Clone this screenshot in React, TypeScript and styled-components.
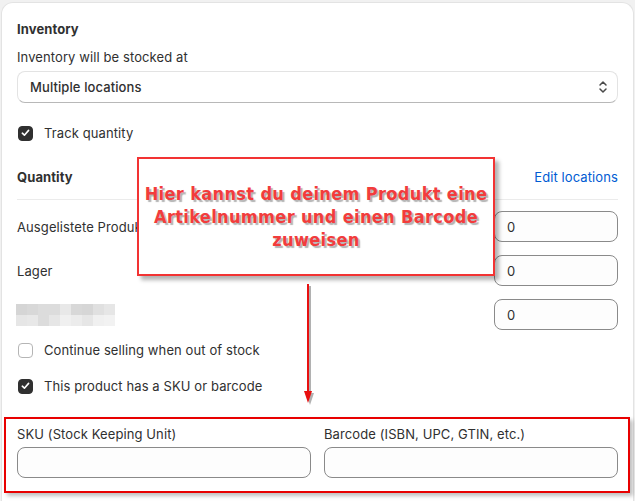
import React from 'react';
import styled, { createGlobalStyle } from 'styled-components';

const GlobalStyle = createGlobalStyle`
  body {
    margin: 0;
    background: #f1f1f1;
    font-family: Inter, 'Liberation Sans', sans-serif;
    color: #303030;
    font-size: 13px;
    letter-spacing: 0.1px;
  }
`;

const Page = styled.div`
  position: relative;
  width: 635px;
  height: 501px;
  overflow: hidden;
`;

const Card = styled.section`
  margin: 2px 1px 0;
  background: #fff;
  border: 1px solid #e3e3e3;
  border-bottom: none;
  border-radius: 12px 12px 0 0;
  padding: 16px 15px 40px;
  height: 520px;
  box-sizing: border-box;
`;

const Heading = styled.h2`
  margin: 0;
  font-size: 13px;
  font-weight: 650;
  line-height: 20px;
`;

const Label = styled.div`
  line-height: 20px;
`;

const Select = styled.div`
  margin-top: 4px;
  height: 32px;
  box-sizing: border-box;
  border: 1px solid #e3e3e3;
  border-bottom-color: #b8b8b8;
  border-radius: 8px;
  display: flex;
  align-items: center;
  justify-content: space-between;
  padding: 0 8px 0 12px;
  font-weight: 500;
`;

const CheckRow = styled.label<{ $top: number }>`
  display: flex;
  align-items: center;
  gap: 11px;
  margin-top: ${({ $top }) => $top}px;
  line-height: 20px;
`;

const Box = styled.span<{ $checked?: boolean }>`
  width: 15px;
  height: 15px;
  box-sizing: border-box;
  margin-left: 1px;
  border-radius: 4px;
  display: flex;
  align-items: center;
  justify-content: center;
  background: ${({ $checked }) => ($checked ? '#303030' : '#fff')};
  border: 1px solid ${({ $checked }) => ($checked ? '#303030' : '#b5b5b5')};
`;

const QuantityHeader = styled.div`
  margin-top: 24px;
  display: flex;
  justify-content: space-between;
  padding-bottom: 12px;
  border-bottom: 1px solid #ebebeb;
`;

const Link = styled.a`
  color: #005bd3;
  line-height: 20px;
`;

const Rows = styled.div`
  display: flex;
  flex-direction: column;
  gap: 13px;
  margin-top: 11px;
`;

const QtyRow = styled.div`
  display: flex;
  justify-content: space-between;
  align-items: center;
`;

const Input = styled.div<{ $width?: string }>`
  width: ${({ $width }) => $width || '100%'};
  height: 31px;
  box-sizing: border-box;
  border: 1px solid #8a8a8a;
  border-radius: 8px;
  background: #fdfdfd;
  padding: 0 12px;
  display: flex;
  align-items: center;
`;

const Pixels = styled.div`
  display: grid;
  grid-template-columns: repeat(9, 11px);
  grid-auto-rows: 11px;
  margin-left: -1px;
`;

const Pixel = styled.span<{ $c: string }>`
  background: ${({ $c }) => $c};
`;

const Fields = styled.div`
  margin-top: 28px;
  display: grid;
  grid-template-columns: 1fr 1fr;
  gap: 13px;
`;

const Field = styled.div`
  display: flex;
  flex-direction: column;
  gap: 3px;
`;

const Callout = styled.div`
  position: absolute;
  left: 137px;
  top: 157px;
  width: 358px;
  height: 119px;
  box-sizing: border-box;
  background: #fff;
  border: 2px solid #f23333;
  box-shadow: 4px 4px 4px rgba(0, 0, 0, 0.3);
  padding-top: 23px;
  text-align: center;
  font-family: 'DejaVu Sans Condensed', 'DejaVu Sans', sans-serif;
  font-weight: 700;
  font-size: 18px;
  line-height: 23px;
  letter-spacing: 0.35px;
  color: #f23c3c;
  text-shadow: 2px 2px 1px rgba(0, 0, 0, 0.3);
`;

const Frame = styled.div`
  position: absolute;
  left: 4px;
  top: 417px;
  width: 626px;
  height: 76px;
  box-sizing: border-box;
  border: 2px solid #e80000;
  box-shadow: 3px 3px 4px rgba(0, 0, 0, 0.25);
`;

const Arrow = styled.svg`
  position: absolute;
  left: 298px;
  top: 282px;
`;

const pixelRows = [
  ['#d5d5d5', '#d8d8d8', '#dcdcdc', '#dcdcdc', '#e8e8e8', '#d8d8d8', '#d6d6d6', '#e0e0e0', '#e6e6e6'],
  ['#e6e6e6', '#e8e8e8', '#dcdcdc', '#e6e6e6', '#f0f0f0', '#ececec', '#e6e6e6', '#f0f0f0', '#f2f2f2'],
];

const Check = () => (
  <svg width="9" height="8" viewBox="0 0 9 8">
    <path d="M1.3 4.2 L3.4 6.2 L7.6 1.4" fill="none" stroke="#fff" strokeWidth="1.6" strokeLinecap="round" strokeLinejoin="round" />
  </svg>
);

const Chevrons = () => (
  <svg width="12" height="16" viewBox="0 0 12 16">
    <path d="M3 6 L6 3 L9 6 M3 10 L6 13 L9 10" fill="none" stroke="#4a4a4a" strokeWidth="1.5" strokeLinecap="round" strokeLinejoin="round" />
  </svg>
);

const App: React.FC = () => (
  <Page>
    <GlobalStyle />
    <Card>
      <Heading>Inventory</Heading>
      <Label style={{ marginTop: 8 }}>Inventory will be stocked at</Label>
      <Select>
        <span>Multiple locations</span>
        <Chevrons />
      </Select>
      <CheckRow $top={20}>
        <Box $checked><Check /></Box>
        Track quantity
      </CheckRow>
      <QuantityHeader>
        <Heading>Quantity</Heading>
        <Link>Edit locations</Link>
      </QuantityHeader>
      <Rows>
        <QtyRow>
          <Label>Ausgelistete Produkte</Label>
          <Input $width="124px">0</Input>
        </QtyRow>
        <QtyRow>
          <Label>Lager</Label>
          <Input $width="124px">0</Input>
        </QtyRow>
        <QtyRow>
          <Pixels>
            {pixelRows.flat().map((c, i) => (
              <Pixel key={i} $c={c} />
            ))}
          </Pixels>
          <Input $width="124px">0</Input>
        </QtyRow>
      </Rows>
      <CheckRow $top={10}>
        <Box />
        Continue selling when out of stock
      </CheckRow>
      <CheckRow $top={16}>
        <Box $checked><Check /></Box>
        This product has a SKU or barcode
      </CheckRow>
      <Fields>
        <Field>
          <Label>SKU (Stock Keeping Unit)</Label>
          <Input />
        </Field>
        <Field>
          <Label>Barcode (ISBN, UPC, GTIN, etc.)</Label>
          <Input />
        </Field>
      </Fields>
    </Card>
    <Callout>
      Hier kannst du deinem Produkt eine
      <br />
      Artikelnummer und einen Barcode
      <br />
      zuweisen
    </Callout>
    <Arrow width="24" height="126" viewBox="0 0 24 126">
      <g transform="translate(2 2)" opacity="0.3">
        <path d="M10 2 L10 110" stroke="#000" strokeWidth="2" />
        <path d="M6 109 L14 109 L10 121 Z" fill="#000" />
      </g>
      <path d="M10 2 L10 110" stroke="#e81010" strokeWidth="2" />
      <path d="M6 109 L14 109 L10 121 Z" fill="#e81010" />
    </Arrow>
    <Frame />
  </Page>
);

export default App;
